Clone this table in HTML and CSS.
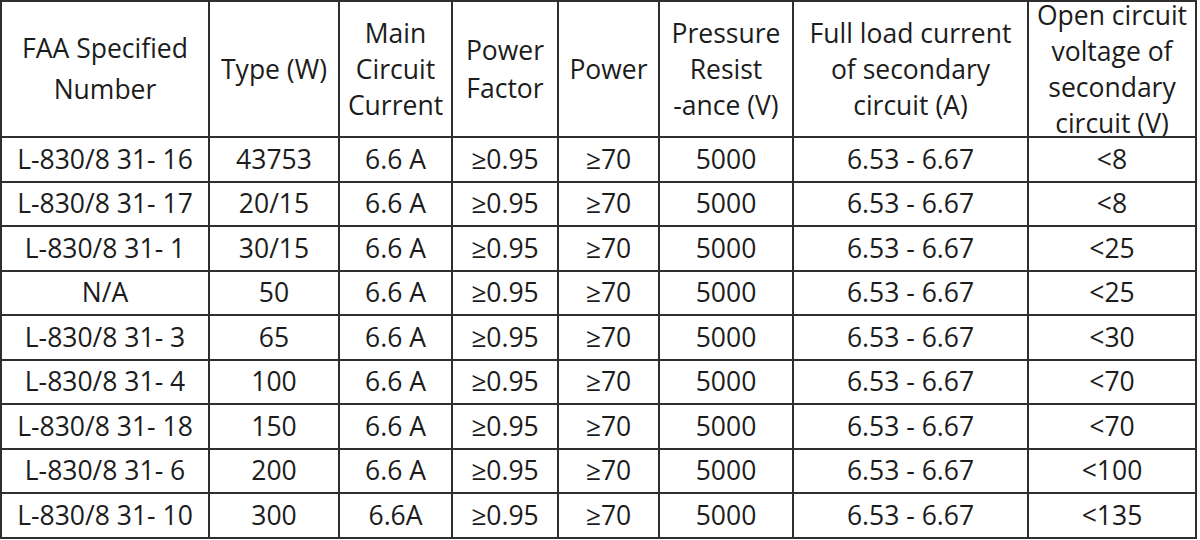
FILE: index.html
```html
<!DOCTYPE html>
<html lang="en">
<head>
<meta charset="utf-8">
<title>FAA Specification Table</title>
<link rel="stylesheet" href="styles.css">
</head>
<body>
<table class="spec">
  <colgroup>
    <col class="c1"><col class="c2"><col class="c3"><col class="c4"><col class="c5"><col class="c6"><col class="c7"><col class="c8">
  </colgroup>
  <thead>
    <tr class="head">
      <th><div class="hcell lh-wide">FAA Specified<br>Number</div></th>
      <th><div class="hcell">Type (W)</div></th>
      <th><div class="hcell">Main<br>Circuit<br>Current</div></th>
      <th><div class="hcell lh-mid">Power<br>Factor</div></th>
      <th><div class="hcell">Power</div></th>
      <th><div class="hcell">Pressure<br>Resist<br>-ance (V)</div></th>
      <th><div class="hcell">Full load current<br>of secondary<br>circuit (A)</div></th>
      <th><div class="hcell">Open circuit<br>voltage of<br>secondary<br>circuit (V)</div></th>
    </tr>
  </thead>
  <tbody>
    <tr><td>L-830/8 31- 16</td><td>43753</td><td>6.6 A</td><td>≥0.95</td><td>≥70</td><td>5000</td><td>6.53 - 6.67</td><td>&lt;8</td></tr>
    <tr><td>L-830/8 31- 17</td><td>20/15</td><td>6.6 A</td><td>≥0.95</td><td>≥70</td><td>5000</td><td>6.53 - 6.67</td><td>&lt;8</td></tr>
    <tr><td>L-830/8 31- 1</td><td>30/15</td><td>6.6 A</td><td>≥0.95</td><td>≥70</td><td>5000</td><td>6.53 - 6.67</td><td>&lt;25</td></tr>
    <tr><td>N/A</td><td>50</td><td>6.6 A</td><td>≥0.95</td><td>≥70</td><td>5000</td><td>6.53 - 6.67</td><td>&lt;25</td></tr>
    <tr><td>L-830/8 31- 3</td><td>65</td><td>6.6 A</td><td>≥0.95</td><td>≥70</td><td>5000</td><td>6.53 - 6.67</td><td>&lt;30</td></tr>
    <tr><td>L-830/8 31- 4</td><td>100</td><td>6.6 A</td><td>≥0.95</td><td>≥70</td><td>5000</td><td>6.53 - 6.67</td><td>&lt;70</td></tr>
    <tr><td>L-830/8 31- 18</td><td>150</td><td>6.6 A</td><td>≥0.95</td><td>≥70</td><td>5000</td><td>6.53 - 6.67</td><td>&lt;70</td></tr>
    <tr><td>L-830/8 31- 6</td><td>200</td><td>6.6 A</td><td>≥0.95</td><td>≥70</td><td>5000</td><td>6.53 - 6.67</td><td>&lt;100</td></tr>
    <tr><td>L-830/8 31- 10</td><td>300</td><td>6.6A</td><td>≥0.95</td><td>≥70</td><td>5000</td><td>6.53 - 6.67</td><td>&lt;135</td></tr>
  </tbody>
</table>
</body>
</html>
```

FILE: styles.css
```css
html, body {
  margin: 0;
  padding: 0;
  background: #ffffff;
}

.spec {
  border-collapse: collapse;
  table-layout: fixed;
  width: 1197px;
  font-family: "Open Sans", "Noto Sans", sans-serif;
  font-size: 26.5px;
  color: #1c1c1c;
}

.c1 { width: 208px; }
.c2 { width: 130px; }
.c3 { width: 113px; }
.c4 { width: 106px; }
.c5 { width: 101px; }
.c6 { width: 134px; }
.c7 { width: 235px; }
.c8 { width: 168px; }

.spec th,
.spec td {
  border: 2px solid #2e2e2e;
  padding: 0;
  text-align: center;
  vertical-align: middle;
  font-weight: normal;
  white-space: nowrap;
}

.hcell {
  height: 134px;
  display: flex;
  align-items: center;
  justify-content: center;
  overflow: hidden;
  line-height: 36px;
}

.lh-wide { line-height: 41px; }
.lh-mid { line-height: 38px; }

.spec tbody tr {
  height: 44.5px;
}

.spec td {
  line-height: 1.2;
  padding-top: 1px;
}
```
